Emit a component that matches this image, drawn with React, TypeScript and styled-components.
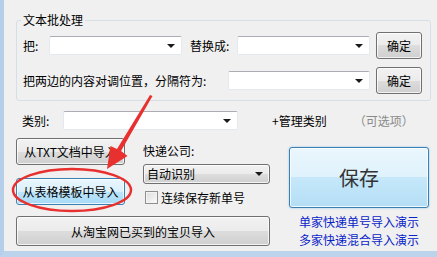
import React from 'react';
import styled, { createGlobalStyle } from 'styled-components';

const GlobalStyle = createGlobalStyle`
  html, body {
    margin: 0;
    padding: 0;
  }
  body {
    background: #f0f0f0;
    font-family: "Noto Sans CJK SC", "Noto Sans", sans-serif;
    font-size: 12px;
    color: #000;
  }
`;

const Shell = styled.div`
  position: relative;
  width: 437px;
  height: 257px;
  overflow: hidden;
`;

const Window = styled.div`
  width: 437px;
  height: 257px;
  box-sizing: border-box;
  border-left: 4px solid #b5cee9;
  border-bottom: 6px solid #bcd3ec;
  background: #f0f0f0;
  padding: 13px 6px 0 12px;
`;

const Group = styled.fieldset`
  margin: 0;
  width: 415px;
  box-sizing: border-box;
  min-inline-size: 0;
  border: 1px solid #d5dfe5;
  border-radius: 3px;
  padding: 0 8px 6px 6px;
`;

const Legend = styled.legend`
  padding: 0 2px;
  margin-left: -2px;
  line-height: 14px;
`;

const Row = styled.div<{ $top?: number }>`
  display: flex;
  align-items: center;
  height: 27px;
  margin-top: ${(p) => p.$top ?? 0}px;
`;

const Label = styled.span<{ $w?: number; $ml?: number; $color?: string }>`
  display: inline-block;
  width: ${(p) => (p.$w ? `${p.$w}px` : 'auto')};
  margin-left: ${(p) => p.$ml ?? 0}px;
  color: ${(p) => p.$color ?? '#000'};
  white-space: nowrap;
  line-height: 16px;
`;

const ComboBox = styled.div<{ $w: number }>`
  position: relative;
  width: ${(p) => p.$w}px;
  height: 19px;
  box-sizing: border-box;
  background: #fff;
  border: 1px solid #e3e9ef;
  border-top-color: #abadb3;
  border-radius: 2px;
`;

const Caret = styled.span`
  position: absolute;
  right: 6px;
  top: 50%;
  margin-top: -2px;
  width: 0;
  height: 0;
  border-left: 4px solid transparent;
  border-right: 4px solid transparent;
  border-top: 4px solid #1a1a1a;
`;

const Button = styled.button<{ $w: number; $h?: number; $hover?: boolean; $ml?: number }>`
  font: inherit;
  color: #000;
  width: ${(p) => p.$w}px;
  height: ${(p) => p.$h ?? 27}px;
  margin-left: ${(p) => p.$ml ?? 0}px;
  padding: 0;
  border: 1px solid ${(p) => (p.$hover ? '#3c7fb1' : '#707070')};
  border-radius: 3px;
  background: ${(p) =>
    p.$hover
      ? 'linear-gradient(#eaf6fd 0%, #d9f0fc 50%, #bee6fd 50%, #a7d9f5 100%)'
      : 'linear-gradient(#f2f2f2 0%, #ebebeb 50%, #dddddd 50%, #cfcfcf 100%)'};
  box-shadow: inset 0 0 0 1px rgba(255, 255, 255, 0.75);
  white-space: nowrap;
`;

const CategoryRow = styled.div`
  display: flex;
  align-items: center;
  height: 19px;
  margin-top: 10px;
  padding-left: 6px;
`;

const Bottom = styled.div`
  display: flex;
  margin-top: 8px;
`;

const LeftBlock = styled.div`
  width: 254px;
  display: flex;
  flex-direction: column;
`;

const TopPart = styled.div`
  display: flex;
`;

const ButtonCol = styled.div`
  display: flex;
  flex-direction: column;
  gap: 13px;
`;

const MiddleCol = styled.div`
  display: flex;
  flex-direction: column;
  margin-left: 18px;
  width: 130px;
`;

const DropList = styled.div`
  position: relative;
  margin-top: 5px;
  height: 20px;
  box-sizing: border-box;
  border: 1px solid #707070;
  border-radius: 3px;
  background: linear-gradient(#f2f2f2 0%, #ebebeb 50%, #dddddd 50%, #cfcfcf 100%);
  box-shadow: inset 0 0 0 1px rgba(255, 255, 255, 0.75);
  padding-left: 3px;
  line-height: 18px;
`;

const CheckRow = styled.label`
  display: flex;
  align-items: center;
  margin-top: 7px;
  padding-left: 2px;
  height: 13px;
`;

const CheckBox = styled.span`
  width: 13px;
  height: 13px;
  box-sizing: border-box;
  border: 1px solid #8e8f8f;
  background: linear-gradient(135deg, #dcdcdc, #fbfbfb);
  box-shadow: inset 0 0 0 1px #f4f4f4;
  margin-right: 3px;
`;

const RightBlock = styled.div`
  display: flex;
  flex-direction: column;
  align-items: center;
  margin-left: 19px;
  margin-top: 9px;
  width: 140px;
`;

const SaveButton = styled.button`
  font-family: "Noto Sans CJK SC", sans-serif;
  font-size: 20px;
  color: #333;
  width: 140px;
  height: 61px;
  padding: 0;
  border: 1px solid #3c7fb1;
  border-radius: 3px;
  background: linear-gradient(#eaf6fd 0%, #dff2fc 50%, #c6e8fa 50%, #b4def5 100%);
  box-shadow: inset 0 0 0 1px rgba(255, 255, 255, 0.8), 0 0 2px #7ec0ec;
`;

const Links = styled.div`
  margin-top: 5px;
  display: flex;
  flex-direction: column;
  align-items: center;
`;

const LinkText = styled.a`
  color: #0a24c8;
  text-decoration: none;
  line-height: 18px;
  white-space: nowrap;
`;

const Annotation = styled.svg`
  position: absolute;
  left: 0;
  top: 0;
  pointer-events: none;
`;

export default function App() {
  return (
    <>
      <GlobalStyle />
      <Shell>
        <Window>
          <Group>
            <Legend>文本批处理</Legend>
            <Row $top={5}>
              <Label $w={26}>把:</Label>
              <ComboBox $w={133}>
                <Caret />
              </ComboBox>
              <Label $w={47} $ml={8}>替换成:</Label>
              <ComboBox $w={133}>
                <Caret />
              </ComboBox>
              <Button $w={46} $ml={6}>确定</Button>
            </Row>
            <Row $top={8}>
              <Label $w={205}>把两边的内容对调位置，分隔符为:</Label>
              <ComboBox $w={142}>
                <Caret />
              </ComboBox>
              <Button $w={46} $ml={6}>确定</Button>
            </Row>
          </Group>

          <CategoryRow>
            <Label $w={41}>类别:</Label>
            <ComboBox $w={175}>
              <Caret />
            </ComboBox>
            <Label $ml={34}>+管理类别</Label>
            <Label $ml={27} $color="#8a8a8a">（可选项）</Label>
          </CategoryRow>

          <Bottom>
            <LeftBlock>
              <TopPart>
                <ButtonCol>
                  <Button $w={109}>从TXT文档中导入</Button>
                  <Button $w={109} $hover>从表格模板中导入</Button>
                </ButtonCol>
                <MiddleCol>
                  <Label style={{ marginTop: 5 }}>快递公司:</Label>
                  <DropList>
                    自动识别
                    <Caret />
                  </DropList>
                  <CheckRow>
                    <CheckBox />
                    连续保存新单号
                  </CheckRow>
                </MiddleCol>
              </TopPart>
              <Button $w={254} $h={30} style={{ marginTop: 11 }}>
                从淘宝网已买到的宝贝导入
              </Button>
            </LeftBlock>
            <RightBlock>
              <SaveButton>保存</SaveButton>
              <Links>
                <LinkText>单家快递单号导入演示</LinkText>
                <LinkText>多家快递混合导入演示</LinkText>
              </Links>
            </RightBlock>
          </Bottom>
        </Window>

        <Annotation width="437" height="257" viewBox="0 0 437 257">
          <ellipse cx="72" cy="190" rx="59" ry="21" fill="none" stroke="#e8302e" strokeWidth="2.5" />
          <polygon
            points="150,95 152.5,96 121,151 127.5,156 107,169 110.5,146 117,149"
            fill="#e8302e"
          />
        </Annotation>
      </Shell>
    </>
  );
}
